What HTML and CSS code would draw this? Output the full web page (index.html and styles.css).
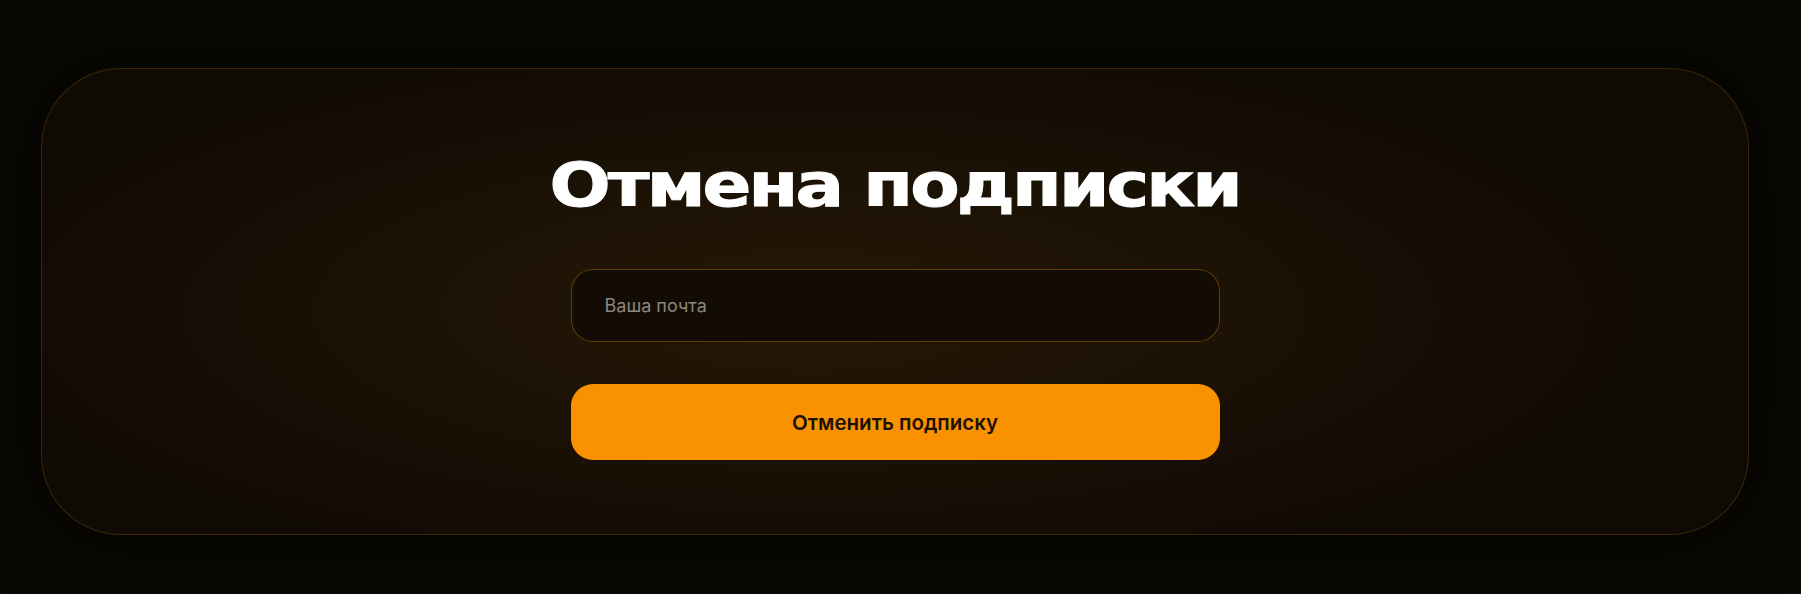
FILE: index.html
```html
<!DOCTYPE html>
<html lang="ru">
<head>
<meta charset="utf-8">
<title>Отмена подписки</title>
<link rel="stylesheet" href="styles.css">
</head>
<body>
<main class="page">
  <section class="card">
    <h1 class="title">Отмена подписки</h1>
    <form class="form">
      <input class="field" type="email" placeholder="Ваша почта">
      <button class="submit" type="button">Отменить подписку</button>
    </form>
  </section>
</main>
</body>
</html>
```

FILE: styles.css
```css
* { box-sizing: border-box; }

html, body {
  margin: 0;
  padding: 0;
  background: #090803;
  height: 100%;
}

.page {
  padding: 68px 52px 0 41px;
  min-height: 594px;
  background: #090803;
}

.card {
  height: 467px;
  border: 1px solid rgba(250, 145, 0, 0.2);
  border-radius: 80px;
  background:
    radial-gradient(ellipse 55% 65% at 45% 52%, #241706 0%, #1d1305 40%, #140d05 75%, #100a05 100%);
  box-shadow: 0 0 70px 10px rgba(0, 0, 0, 0.65);
  padding-top: 80px;
  display: flex;
  flex-direction: column;
  align-items: center;
}

.title {
  margin: 0;
  font-family: "DejaVu Sans", sans-serif;
  font-weight: 700;
  font-size: 60px;
  line-height: 72px;
  color: #ffffff;
  letter-spacing: -2.4px;
  -webkit-text-stroke: 1px #ffffff;
  transform: scaleX(1.2);
}

.form {
  margin-top: 48px;
  width: 649px;
  display: flex;
  flex-direction: column;
  gap: 42px;
}

.field {
  display: block;
  width: 100%;
  height: 73px;
  border: 1px solid rgba(250, 145, 0, 0.35);
  border-radius: 22px;
  background: #130c04;
  padding: 0 0 0 33px;
  font-family: Inter, "Noto Sans", sans-serif;
  font-size: 18px;
  color: #e8e2da;
  outline: none;
}

.field::placeholder {
  color: #8b8680;
}

.submit {
  display: block;
  width: 100%;
  height: 76px;
  border: none;
  border-radius: 22px;
  background: #fa9100;
  font-family: Inter, "Noto Sans", sans-serif;
  font-weight: 600;
  font-size: 20.5px;
  color: #1b1206;
  cursor: pointer;
}
```
